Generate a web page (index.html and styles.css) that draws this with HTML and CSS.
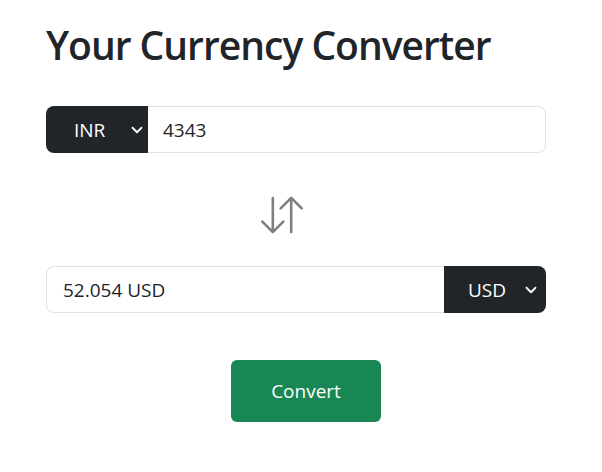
FILE: index.html
```html
<!DOCTYPE html>
<html>
<head>
<meta charset="utf-8">
<link rel="stylesheet" href="styles.css">
</head>
<body>
<main class="app">
  <h1 class="title">Your Currency Converter</h1>
  <div class="group">
    <div class="select select-left"><span>INR</span>
      <svg class="chev" viewBox="0 0 16 16" width="12" height="12"><path d="M2 5l6 6 6-6" fill="none" stroke="#fff" stroke-width="2.4" stroke-linecap="round" stroke-linejoin="round"/></svg>
    </div>
    <div class="field field-right">4343</div>
  </div>
  <div class="swap">
    <svg viewBox="0 0 16 16" width="42" height="42" fill="#808080"><path d="M11.5 15a.5.5 0 0 0 .5-.5V2.707l3.146 3.147a.5.5 0 0 0 .708-.708l-4-4a.5.5 0 0 0-.708 0l-4 4a.5.5 0 1 0 .708.708L11 2.707V14.5a.5.5 0 0 0 .5.5m-7-14a.5.5 0 0 1 .5.5v11.793l3.146-3.147a.5.5 0 0 1 .708.708l-4 4a.5.5 0 0 1-.708 0l-4-4a.5.5 0 0 1 .708-.708L4 13.293V1.5a.5.5 0 0 1 .5-.5"/></svg>
  </div>
  <div class="group">
    <div class="field field-left">52.054 USD</div>
    <div class="select select-right"><span>USD</span>
      <svg class="chev" viewBox="0 0 16 16" width="12" height="12"><path d="M2 5l6 6 6-6" fill="none" stroke="#fff" stroke-width="2.4" stroke-linecap="round" stroke-linejoin="round"/></svg>
    </div>
  </div>
  <div class="actions"><button class="btn">Convert</button></div>
</main>
</body>
</html>
```
FILE: styles.css
```css
html, body { margin: 0; padding: 0; background: #fff; }
body { font-family: "Open Sans", "Noto Sans", sans-serif; color: #212529; }
.app { width: 500px; margin-left: 46px; padding-top: 19px; }
.title { font-size: 39px; font-weight: 600; line-height: 52px; margin: 0 0 35px 0; letter-spacing: -1px; }
.group { display: flex; height: 47px; }
.select { width: 102px; flex: none; box-sizing: border-box; background: #212529; color: #fff; font-size: 19px; display: flex; align-items: center; padding-left: 28px; }
.select span { width: 57px; }
.select-left { border-radius: 8px 0 0 8px; }
.select-right { border-radius: 0 8px 8px 0; padding-left: 24px; }
.chev { flex: none; }
.field { flex: 1; box-sizing: border-box; border: 1px solid #dee2e6; display: flex; align-items: center; padding-left: 15px; font-size: 19px; }
.field-right { border-left: none; border-radius: 0 8px 8px 0; }
.field-left { border-right: none; border-radius: 8px 0 0 8px; padding-left: 16px; }
.swap { display: flex; justify-content: center; padding: 41px 0 30px 0; margin-left: -28px; }
.swap svg { display: block; }
.actions { display: flex; padding-top: 47px; padding-left: 185px; }
.btn { width: 150px; height: 62px; background: #198754; color: #fff; border: none; border-radius: 6px; font-family: inherit; font-size: 19px; }
```
